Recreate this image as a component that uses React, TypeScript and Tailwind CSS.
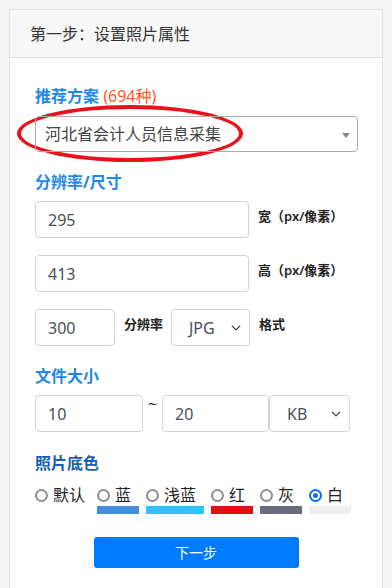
import React from 'react';

const cjk = { fontFamily: '"Noto Sans", "Noto Sans CJK SC", sans-serif' };

function Chevron() {
  return (
    <svg width="10" height="10" viewBox="0 0 16 16" className="absolute right-[8px] top-1/2 -translate-y-1/2">
      <path d="M2 5l6 6 6-6" fill="none" stroke="#343a40" strokeWidth="2" strokeLinecap="round" strokeLinejoin="round" />
    </svg>
  );
}

function Field({ value, className }: { value: string; className: string }) {
  return (
    <div className={`h-[37px] border border-[#ced4da] rounded-[4px] bg-white flex items-center pl-[12px] text-[16px] text-[#495057] ${className}`}>
      {value}
    </div>
  );
}

function Select({ value, className }: { value: string; className: string }) {
  return (
    <div className={`relative h-[37px] border border-[#ced4da] rounded-[4px] bg-white flex items-center pl-[17px] text-[16px] text-[#495057] ${className}`}>
      {value}
      <Chevron />
    </div>
  );
}

const colors = [
  { name: '默认', w: 'w-[55px]', swatch: '' },
  { name: '蓝', w: 'w-[42px]', swatch: 'bg-[#448fdb]' },
  { name: '浅蓝', w: 'w-[58px]', swatch: 'bg-[#2dc4fd]' },
  { name: '红', w: 'w-[42px]', swatch: 'bg-[#e60b15]' },
  { name: '灰', w: 'w-[42px]', swatch: 'bg-[#696c7e]' },
  { name: '白', w: 'w-[42px]', swatch: 'bg-[#eeeeee]', checked: true },
];

export default function App() {
  return (
    <div className="w-[392px] h-[588px] bg-[#f4f4f4] overflow-hidden pt-[9px]" style={cjk}>
      <div className="ml-[9px] w-[374px] h-[600px] bg-white border border-[#e4e4e4]">
        <div className="h-[48px] bg-[#f7f7f7] border-b border-[#dcdcdc] flex items-center pl-[20px] text-[16px] text-[#333]">
          第一步：设置照片属性
        </div>

        <div className="relative pl-[25px] pt-[27px]">
          {/* red ellipse annotation */}
          <div className="absolute left-[7px] top-[47px] w-[226px] h-[57px] rounded-[50%] border-[4px] border-[#e8121a]" />

          <div className="h-[22px] leading-[22px] text-[16px] font-bold text-[#2288e6]">
            推荐方案<span className="font-normal text-[#ff5a1f]"> (694种)</span>
          </div>
          <div className="relative mt-[9px] w-[323px] h-[36px] border border-[#aaaaaa] rounded-[4px] flex items-center pl-[9px] text-[16px] text-[#444]">
            河北省会计人员信息采集
            <div className="absolute right-[7px] top-[16px] w-0 h-0 border-l-[4px] border-r-[4px] border-t-[5px] border-l-transparent border-r-transparent border-t-[#888]" />
          </div>

          <div className="mt-[19px] h-[22px] leading-[22px] text-[16px] font-bold text-[#2288e6]">分辨率/尺寸</div>

          <div className="mt-[8px] flex items-start">
            <Field value="295" className="w-[214px]" />
            <div className="ml-[9px] pt-[6px] leading-[18px] text-[13px] font-semibold text-[#222]">宽（px/像素）</div>
          </div>
          <div className="mt-[17px] flex items-start">
            <Field value="413" className="w-[214px]" />
            <div className="ml-[9px] pt-[6px] leading-[18px] text-[13px] font-semibold text-[#222]">高（px/像素）</div>
          </div>
          <div className="mt-[17px] flex items-start">
            <Field value="300" className="w-[80px]" />
            <div className="ml-[9px] w-[47px] pt-[6px] leading-[18px] text-[13px] font-semibold text-[#222]">分辨率</div>
            <Select value="JPG" className="w-[79px]" />
            <div className="ml-[9px] pt-[6px] leading-[18px] text-[13px] font-semibold text-[#222]">格式</div>
          </div>

          <div className="mt-[19px] h-[22px] leading-[22px] text-[16px] font-bold text-[#2288e6]">文件大小</div>

          <div className="mt-[8px] flex items-start">
            <Field value="10" className="w-[108px]" />
            <div className="w-[19px] text-center text-[16px] leading-[18px] text-[#333]">~</div>
            <Field value="20" className="w-[107px]" />
            <Select value="KB" className="w-[81px]" />
          </div>

          <div className="mt-[20px] h-[22px] leading-[22px] text-[16px] font-bold text-[#1560b0]">照片底色</div>

          <div className="mt-[11px] flex gap-[7px]">
            {colors.map((c) => (
              <div key={c.name} className={`${c.w} flex flex-col`}>
                <div className="flex items-center h-[20px]">
                  {c.checked ? (
                    <span className="w-[13px] h-[13px] rounded-full border-[2px] border-[#0b6fe8] flex items-center justify-center">
                      <span className="w-[5px] h-[5px] rounded-full bg-[#0b6fe8]" />
                    </span>
                  ) : (
                    <span className="w-[13px] h-[13px] rounded-full border-[2px] border-[#8e8e9a]" />
                  )}
                  <span className="ml-[5px] text-[16px] leading-[20px] text-[#222]">{c.name}</span>
                </div>
                <div className={`mt-[1px] h-[8px] ${c.swatch}`} />
              </div>
            ))}
          </div>

          <div className="mt-[23px] flex justify-center pr-[25px]">
            <button className="w-[205px] h-[31px] bg-[#007bff] rounded-[3px] text-white text-[14px]">下一步</button>
          </div>
        </div>
      </div>
    </div>
  );
}
